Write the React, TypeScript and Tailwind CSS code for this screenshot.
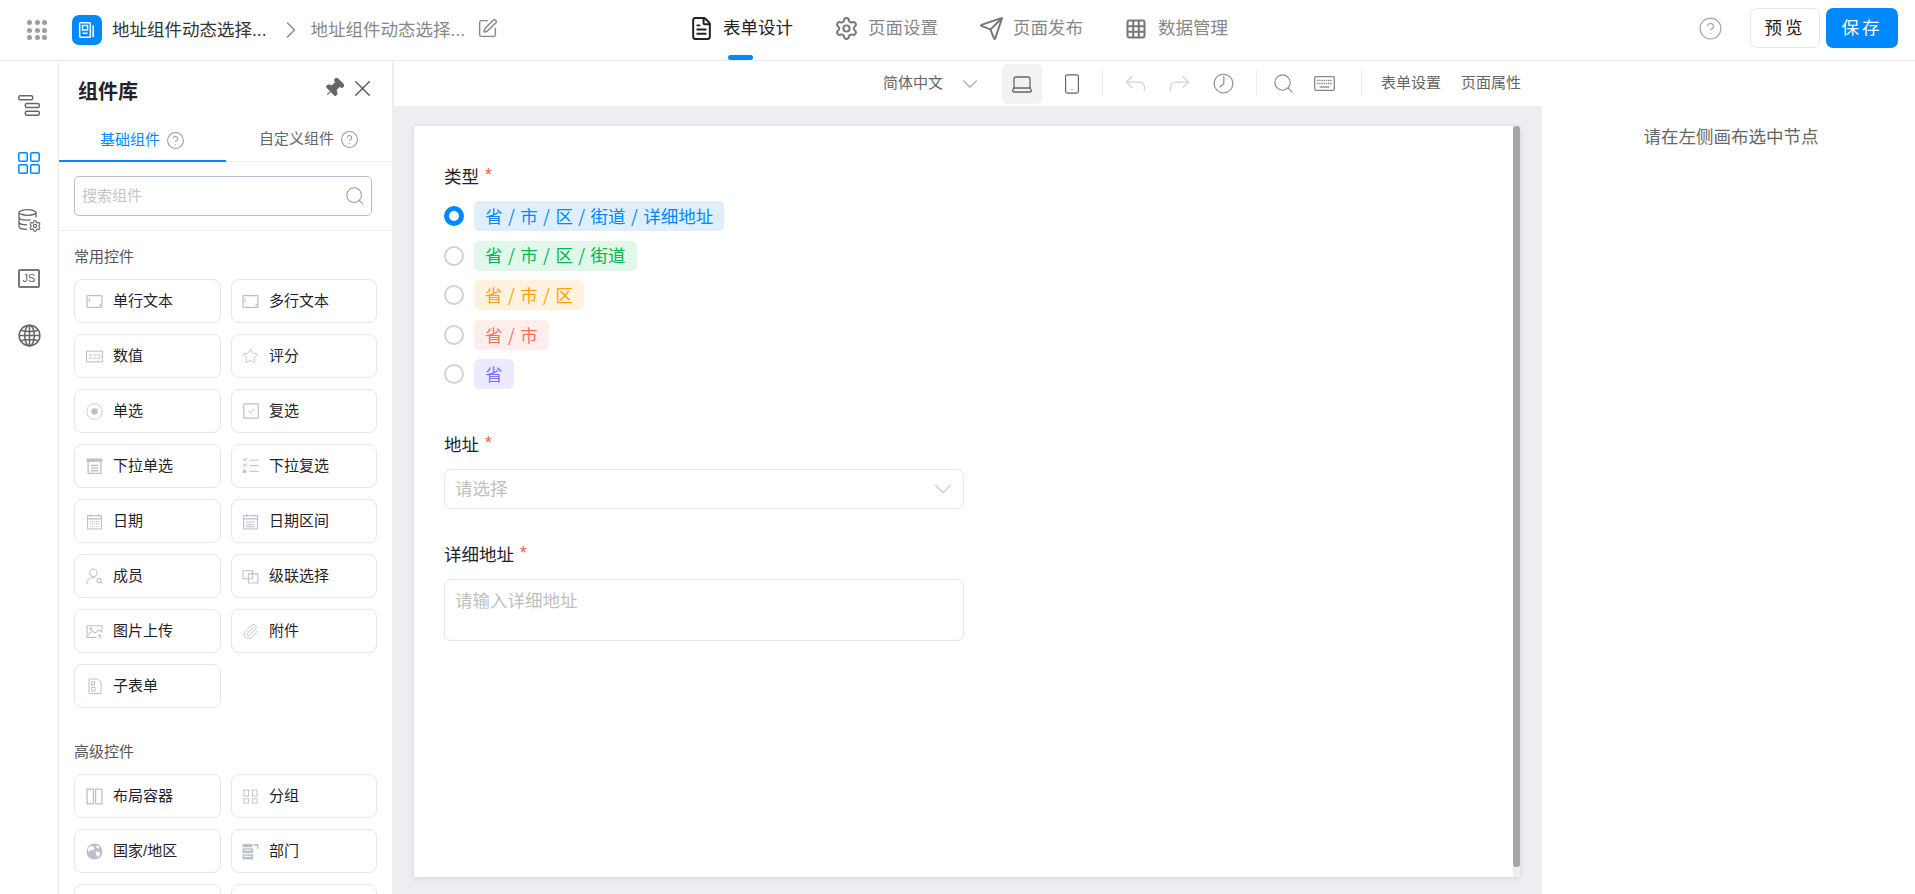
import React from 'react';
import {
  ChevronDown,
  ChevronRight,
  CircleHelp,
  FileText,
  Paperclip,
  Pin,
  Search,
  Send,
  Settings,
  Smartphone,
  Laptop,
  SquarePen,
  Star,
  X,
} from 'lucide-react';

const Glyph: React.FC<{ children: React.ReactNode; className?: string }> = ({ children, className }) => (
  <svg viewBox="0 0 16 16" fill="none" stroke="currentColor" strokeWidth="1" className={className}>
    {children}
  </svg>
);

const InputIcon = () => (
  <Glyph className="w-[17px] h-[17px]">
    <rect x="1" y="2.5" width="14" height="11" rx="0.5" strokeWidth="1.2" />
    <path d="M3 5v3.500M12 11.500h1.500V10" />
  </Glyph>
);
const NumberIcon = () => (
  <svg viewBox="0 0 16 16" fill="none" className="w-[17px] h-[17px]">
    <rect x="0.5" y="3" width="15" height="10" stroke="currentColor" />
    <text x="8" y="10.6" textAnchor="middle" fontSize="7" fill="currentColor" stroke="none">123</text>
  </svg>
);
const RadioIcon = () => (
  <Glyph className="w-[19px] h-[19px]">
    <circle cx="8" cy="8" r="7.200" strokeDasharray="2 0.4" strokeWidth="0.9" />
    <circle cx="8" cy="8" r="3" fill="currentColor" stroke="none" />
  </Glyph>
);
const CheckIcon = () => (
  <Glyph className="w-[16px] h-[16px]">
    <rect x="0.800" y="0.800" width="14.400" height="14.400" rx="1" strokeWidth="1.200" />
    <path d="M5.500 8l2 2 3.500-4" />
  </Glyph>
);
const SelectIcon = () => (
  <Glyph className="w-[17px] h-[17px]">
    <path d="M1 1h14v2H1z" fill="currentColor" />
    <path d="M2 3.500v11h12v-11M4.500 7h7M4.500 9.500h7M4.500 12h7" strokeWidth="1.200" />
  </Glyph>
);
const MultiSelectIcon = () => (
  <Glyph className="w-[18px] h-[18px]">
    <path d="M1 1.500l1.500 1.500 2-2.500M1 6.500l1.500 1.500 2-2.500M7 2.500h8.500M7 7.500h8.500M7 13h8.500" />
    <rect x="1" y="11.500" width="3" height="3" fill="currentColor" stroke="none" />
  </Glyph>
);
const DateIcon = () => (
  <Glyph className="w-[17px] h-[17px]">
    <rect x="1.500" y="2.500" width="13" height="12.500" />
    <path d="M1.500 5.500h13M4.500 1v2.500M11.500 1v2.500" />
    <path d="M4 8h8M4 10h8M4 12.500h8" strokeDasharray="1 0.800" />
  </Glyph>
);
const DateRangeIcon = () => (
  <Glyph className="w-[17px] h-[17px]">
    <rect x="1.500" y="2.500" width="13" height="12.500" />
    <path d="M1.500 5.500h13M4.500 1v2.500M11.500 1v2.500M4 8.500h8M4 11h8M4 13h8" />
  </Glyph>
);
const MemberIcon = () => (
  <Glyph className="w-[17px] h-[17px]">
    <circle cx="7" cy="4.500" r="3.500" />
    <path d="M0.800 15c0-3.500 2.500-6 6-6 0.800 0 1.500 0.100 2 0.300" />
    <circle cx="12.300" cy="11.800" r="2" />
    <path d="M13.800 13.300l1.500 1.500" />
  </Glyph>
);
const CascadeIcon = () => (
  <Glyph className="w-[18px] h-[18px]">
    <path d="M7 10.500H1V3h9v3" />
    <path d="M6 6h9v8.500H6z" />
    <path d="M10 3v7.500H7" />
  </Glyph>
);
const ImageIcon = () => (
  <Glyph className="w-[17px] h-[17px]">
    <path d="M15 9V2.500H1v11h9" />
    <circle cx="4.500" cy="5.500" r="1" />
    <path d="M2 11.500l4-4 2.500 2 3.500-3 2.500 2M13 15v-4M11.500 12.500L13 11l1.500 1.500" />
  </Glyph>
);
const SubFormIcon = () => (
  <Glyph className="w-[16px] h-[16px]">
    <path d="M2 1h8.500L14 4v11.500H2z" />
    <rect x="4.500" y="4" width="3" height="3" />
    <rect x="4.500" y="9.500" width="3.500" height="3.500" />
  </Glyph>
);
const LayoutIcon = () => (
  <Glyph className="w-[17px] h-[17px]">
    <rect x="1" y="1" width="6" height="14" rx="0.500" strokeWidth="1.200" />
    <rect x="9" y="1" width="6" height="14" rx="0.500" strokeWidth="1.200" />
  </Glyph>
);
const GroupIcon = () => (
  <Glyph className="w-[15px] h-[15px]">
    <rect x="1" y="1" width="5" height="6.500" />
    <rect x="10" y="1" width="5" height="6.500" />
    <rect x="1" y="10.500" width="5" height="4.500" />
    <rect x="10" y="10.500" width="5" height="4.500" />
  </Glyph>
);
const EarthIcon = () => (
  <svg viewBox="0 0 16 16" className="w-[17px] h-[17px]">
    <circle cx="8" cy="8" r="7.500" fill="currentColor" />
    <path d="M4 2.500l3 1 1 2-2 1.500-2-.500-1.500 2L1.500 6zM9 8l3.500.500 1 2-2.500 3-1.500-2.500zM10 2l3 2-1.500 1.500L9.500 4z" fill="#fff" />
  </svg>
);
const DeptIcon = () => (
  <svg viewBox="0 0 16 16" className="w-[17px] h-[17px]" fill="currentColor">
    <path d="M0.500 1h9.500v3H0.500zM11 1h4.500v4.500H14V2.500h-3zM0.500 5h10v4.500h-10zM0.500 10.500h10v5h-10z" />
    <path d="M2 6.500h7M2 12.500h7" stroke="#fff" />
  </svg>
);

const common: { label: string; icon: React.ReactNode }[] = [
  { label: '单行文本', icon: <InputIcon /> },
  { label: '多行文本', icon: <InputIcon /> },
  { label: '数值', icon: <NumberIcon /> },
  { label: '评分', icon: <Star strokeWidth={1.200} className="w-[18px] h-[18px]" /> },
  { label: '单选', icon: <RadioIcon /> },
  { label: '复选', icon: <CheckIcon /> },
  { label: '下拉单选', icon: <SelectIcon /> },
  { label: '下拉复选', icon: <MultiSelectIcon /> },
  { label: '日期', icon: <DateIcon /> },
  { label: '日期区间', icon: <DateRangeIcon /> },
  { label: '成员', icon: <MemberIcon /> },
  { label: '级联选择', icon: <CascadeIcon /> },
  { label: '图片上传', icon: <ImageIcon /> },
  { label: '附件', icon: <Paperclip strokeWidth={1.300} className="w-[17px] h-[17px]" /> },
  { label: '子表单', icon: <SubFormIcon /> },
];

const advanced: { label: string; icon: React.ReactNode }[] = [
  { label: '布局容器', icon: <LayoutIcon /> },
  { label: '分组', icon: <GroupIcon /> },
  { label: '国家/地区', icon: <EarthIcon /> },
  { label: '部门', icon: <DeptIcon /> },
  { label: '', icon: null },
  { label: '', icon: null },
];

const typeOptions = [
  { label: '省 / 市 / 区 / 街道 / 详细地址', tag: 'bg-[#dfefff] text-[#0089ff]', checked: true },
  { label: '省 / 市 / 区 / 街道', tag: 'bg-[#e0f7ea] text-[#00b853]', checked: false },
  { label: '省 / 市 / 区', tag: 'bg-[#fff3e0] text-[#ffa200]', checked: false },
  { label: '省 / 市', tag: 'bg-[#ffeeec] text-[#ff6f61]', checked: false },
  { label: '省', tag: 'bg-[#ebebff] text-[#7b72ff]', checked: false },
];

const tabs = [
  { label: '表单设计', icon: FileText, active: true },
  { label: '页面设置', icon: Settings, active: false },
  { label: '页面发布', icon: Send, active: false },
  { label: '数据管理', icon: null, active: false },
];

const TableIcon = () => (
  <svg viewBox="0 0 20 20" className="w-[20px] h-[20px] text-[#777]" fill="none" stroke="currentColor" strokeWidth="2">
    <rect x="1.500" y="1.500" width="17" height="17" rx="2" />
    <path d="M7.200 1.500v17M12.800 1.500v17M1.500 7.200h17M1.500 12.800h17" />
  </svg>
);

const UndoIcon = () => (
  <svg viewBox="0 0 22 18" className="w-[21px] h-[17px] text-[#d4d4d4]" fill="none" stroke="currentColor" strokeWidth="1.400">
    <path d="M7.500 1.500L1.500 7.500l6 6M1.500 7.500H15c3.300 0 5.500 2.500 5.500 5.500v4" />
  </svg>
);

const RedoIcon = () => (
  <svg viewBox="0 0 22 18" className="w-[21px] h-[17px] text-[#d4d4d4]" fill="none" stroke="currentColor" strokeWidth="1.400">
    <path d="M14.500 1.500l6 6-6 6M20.500 7.500H7C3.700 7.500 1.500 10 1.500 13v4" />
  </svg>
);

const HistoryIcon = () => (
  <svg viewBox="0 0 22 22" className="w-[21px] h-[21px] text-[#999]" fill="none" stroke="currentColor" strokeWidth="1.400">
    <circle cx="11" cy="11" r="9.800" />
    <path d="M11.300 3.500v8l-4.500 3.500" />
  </svg>
);

const KeyboardIcon = () => (
  <svg viewBox="0 0 21 15" className="w-[21px] h-[15px] text-[#888]" fill="none" stroke="currentColor" strokeWidth="1.300">
    <rect x="0.700" y="0.700" width="19.600" height="13.600" rx="1" />
    <path d="M3 4.500h15M3 7.500h15" strokeDasharray="1.400 0.800" />
    <path d="M5.500 11h10" />
  </svg>
);

const ComponentCard: React.FC<{ label: string; icon: React.ReactNode; second?: boolean }> = ({ label, icon, second }) => (
  <div className="h-[44px] flex items-center border border-[#e6e7ea] rounded-[8px] bg-white">
    <div className={second ? 'w-[17px] ml-[10px] flex justify-center text-[#b9c0cc]' : 'w-[17px] ml-[11px] flex justify-center text-[#b9c0cc]'}>
      {icon}
    </div>
    <span className="ml-[10px] text-[15px] text-[#1f2329]">{label}</span>
  </div>
);

const RequiredLabel: React.FC<{ text: string; className?: string }> = ({ text, className }) => (
  <div className={`h-[24px] flex items-center text-[17.500px] text-[#1f2329] ${className ?? ''}`}>
    {text}
    <span className="ml-[6px] text-[#ff5a46] text-[17.500px] leading-none -mt-[3px]">*</span>
  </div>
);

const RailIcon: React.FC<{ children: React.ReactNode }> = ({ children }) => (
  <div className="h-[57.500px] flex items-center justify-center">{children}</div>
);

export default function App() {
  return (
    <div className="h-[894px] overflow-hidden bg-white flex flex-col font-['Liberation_Sans','Noto_Sans_CJK_SC',sans-serif]">
      {/* top bar */}
      <header className="h-[61px] shrink-0 flex items-center border-b border-[#ebecee]">
        <div className="w-[691px] flex items-center">
          <div className="ml-[27px] w-[20px] grid grid-cols-3 gap-[2.500px]">
            {Array.from({ length: 9 }).map((_, i) => (
              <span key={i} className="w-[5px] h-[5px] rounded-full bg-[#999da3]" />
            ))}
          </div>
          <div className="ml-[25px] w-[30px] h-[30px] rounded-[7px] bg-[#0089ff] flex items-center justify-center">
            <svg viewBox="0 0 16 16" className="w-[18px] h-[18px]" fill="none" stroke="#fff" strokeWidth="1.300">
              <rect x="1.500" y="1.500" width="9.500" height="13" rx="0.800" />
              <rect x="4" y="4" width="4.500" height="4" />
              <path d="M4 10.800h4.500M13.500 4v10.500" />
            </svg>
          </div>
          <span className="ml-[10px] text-[17.500px] text-[#333]">地址组件动态选择...</span>
          <ChevronRight className="ml-[10px] -mt-[1px] w-[28px] h-[28px] text-[#888]" strokeWidth={1.200} />
          <span className="ml-[6px] text-[17.500px] text-[#888]">地址组件动态选择...</span>
          <SquarePen className="ml-[12px] -mt-[4px] w-[21px] h-[21px] text-[#888]" strokeWidth={1.600} />
        </div>
        <nav className="flex items-center h-full">
          {tabs.map((tab) => (
            <div key={tab.label} className="relative w-[145px] h-full flex items-center pb-[3px]">
              <div className="w-[20px] flex justify-center">
                {tab.icon ? (
                  <tab.icon
                    className={tab.active ? 'shrink-0 w-[25px] h-[25px] text-[#222]' : 'shrink-0 w-[25px] h-[25px] text-[#777]'}
                    strokeWidth={1.900}
                  />
                ) : (
                  <TableIcon />
                )}
              </div>
              <span className={tab.active ? 'ml-[12px] text-[17.500px] text-[#222]' : 'ml-[12px] text-[17.500px] text-[#888]'}>
                {tab.label}
              </span>
              {tab.active && (
                <span className="absolute left-[37px] bottom-0 w-[25px] h-[5px] rounded-[3px] bg-[#0089ff]" />
              )}
            </div>
          ))}
        </nav>
        <div className="ml-auto flex items-center pr-[17px] pb-[4px]">
          <CircleHelp className="w-[25px] h-[25px] text-[#aaa]" strokeWidth={1.200} />
          <button className="ml-[27px] w-[70px] h-[40px] rounded-[7px] border border-[#e6e7ea] text-[17.500px] text-[#222] tracking-[3px]">
            预览
          </button>
          <button className="ml-[6px] w-[72px] h-[40px] rounded-[7px] bg-[#0089ff] text-[17.500px] text-white tracking-[3px]">
            保存
          </button>
        </div>
      </header>

      <div className="flex-1 min-h-0 flex">
        {/* icon rail */}
        <aside className="w-[59px] shrink-0 border-r border-[#ebecee] pt-[16px] flex flex-col">
          <RailIcon>
            <svg viewBox="0 0 22 21" className="w-[22px] h-[21px]" fill="none" stroke="#666" strokeWidth="1.400">
              <rect x="0.700" y="0.700" width="14" height="4" rx="1.500" />
              <rect x="7.300" y="8.500" width="14" height="4" rx="1.500" />
              <rect x="7.300" y="16.300" width="14" height="4" rx="1.500" />
            </svg>
          </RailIcon>
          <RailIcon>
            <svg viewBox="0 0 22 22" className="w-[22px] h-[22px]" fill="none" stroke="#0089ff" strokeWidth="1.500">
              <rect x="0.800" y="0.800" width="8.500" height="8.500" rx="1.300" />
              <rect x="12.700" y="0.800" width="8.500" height="8.500" rx="1.300" />
              <rect x="0.800" y="12.700" width="8.500" height="8.500" rx="1.300" />
              <rect x="12.700" y="12.700" width="8.500" height="8.500" rx="1.300" />
            </svg>
          </RailIcon>
          <RailIcon>
            <svg viewBox="0 0 23 23" className="w-[23px] h-[23px]" fill="none" stroke="#666" strokeWidth="1.300">
              <ellipse cx="9.500" cy="3.500" rx="8.500" ry="2.800" />
              <path d="M1 3.500v14c0 1.600 3.500 2.900 8 2.900M18 3.500v5M1 8.200c0 1.600 3.500 2.900 8.500 2.900 1 0 2-0.100 3-0.200M1 13c0 1.600 3.500 2.900 8 2.900" />
              <Settings x="10.500" y="10.500" width="13" height="13" strokeWidth={2} color="#666" />
            </svg>
          </RailIcon>
          <RailIcon>
            <div className="w-[22px] h-[19px] border-2 border-[#777] rounded-[2px] flex items-center justify-center text-[11px] leading-none text-[#666]">
              JS
            </div>
          </RailIcon>
          <RailIcon>
            <svg viewBox="0 0 24 24" className="w-[23px] h-[23px]" fill="none" stroke="#666" strokeWidth="1.600">
              <circle cx="12" cy="12" r="10.800" />
              <ellipse cx="12" cy="12" rx="5" ry="10.800" />
              <path d="M12 1.200v21.600M1.200 12h21.600M3 6.500c5 1.800 13 1.800 18 0M3 17.500c5-1.800 13-1.800 18 0" />
            </svg>
          </RailIcon>
        </aside>

        {/* component library */}
        <section className="w-[335px] shrink-0 border-r-2 border-[#eceef2] overflow-hidden">
          <div className="h-[61px] flex items-center pl-[19px] pr-[16px]">
            <h2 className="text-[20px] font-bold text-[#1f2329]">组件库</h2>
            <Pin className="ml-auto -mt-[7px] w-[22px] h-[22px] rotate-45 text-[#666]" fill="#666" strokeWidth={1.200} />
            <X className="ml-[4px] -mt-[7px] w-[27px] h-[27px] text-[#555]" strokeWidth={1.200} />
          </div>
          <div className="h-[40px] flex border-b border-[#ebecee]">
            <div className="w-[167px] h-[40px] pb-[2px] border-b-2 border-[#0089ff] flex items-center justify-center text-[15px] text-[#0089ff]">
              基础组件
              <CircleHelp className="ml-[6px] w-[19px] h-[19px] text-[#999]" strokeWidth={1.300} />
            </div>
            <div className="flex-1 pb-[4px] flex items-center justify-center text-[15px] text-[#666]">
              自定义组件
              <CircleHelp className="ml-[6px] w-[19px] h-[19px] text-[#999]" strokeWidth={1.300} />
            </div>
          </div>
          <div className="pt-[14px] pb-[14px] px-[15px] border-b border-[#ebecee]">
            <div className="w-[298px] h-[40px] rounded-[5px] border border-[#b8bfcc] flex items-center pl-[7px] pr-[5px]">
              <span className="text-[15px] text-[#c4c4c4]">搜索组件</span>
              <Search className="ml-auto w-[22px] h-[22px] text-[#999]" strokeWidth={1.100} />
            </div>
          </div>
          <div className="pl-[15px]">
            <div className="mt-[16px] h-[20px] flex items-center text-[15px] text-[#555]">常用控件</div>
            <div className="mt-[12px] grid grid-cols-[147px_146px] gap-x-[10px] gap-y-[11px]">
              {common.map((item, i) => (
                <ComponentCard key={item.label} label={item.label} icon={item.icon} second={i % 2 === 1} />
              ))}
            </div>
            <div className="mt-[34px] h-[20px] flex items-center text-[15px] text-[#555]">高级控件</div>
            <div className="mt-[12px] grid grid-cols-[147px_146px] gap-x-[10px] gap-y-[11px]">
              {advanced.map((item, i) => (
                <ComponentCard key={i} label={item.label} icon={item.icon} second={i % 2 === 1} />
              ))}
            </div>
          </div>
        </section>

        {/* canvas */}
        <main className="w-[1148px] shrink-0 flex flex-col">
          <div className="h-[45px] shrink-0 flex items-center justify-end pr-[21px]">
            <span className="text-[15px] text-[#666]">简体中文</span>
            <ChevronDown className="ml-[14px] w-[26px] h-[26px] text-[#aaa]" strokeWidth={1} />
            <div className="ml-[19px] w-[40px] h-[40px] rounded-[5px] bg-[#f1f2f3] flex items-center justify-center">
              <Laptop className="w-[24px] h-[24px] text-[#666]" strokeWidth={1.300} />
            </div>
            <Smartphone className="ml-[19px] w-[22px] h-[22px] text-[#666]" strokeWidth={1.300} />
            <span className="ml-[19px] w-px h-[25px] bg-[#ebecee]" />
            <div className="ml-[22px]"><UndoIcon /></div>
            <div className="ml-[23px]"><RedoIcon /></div>
            <div className="ml-[23px]"><HistoryIcon /></div>
            <span className="ml-[22px] w-px h-[25px] bg-[#ebecee]" />
            <Search className="ml-[15px] w-[23px] h-[23px] text-[#888]" strokeWidth={1.200} />
            <div className="ml-[19px]"><KeyboardIcon /></div>
            <span className="ml-[26px] w-px h-[25px] bg-[#ebecee]" />
            <span className="ml-[19px] text-[15px] text-[#666]">表单设置</span>
            <span className="ml-[20px] text-[15px] text-[#666]">页面属性</span>
          </div>
          <div className="flex-1 bg-[#eceef2] pt-[20px] pl-[20px] pr-[22px]">
            <div className="h-[751px] bg-white shadow-[0_1px_6px_rgba(0,0,0,0.10)] flex">
              <div className="flex-1 pl-[30px] pt-[39px]">
                <RequiredLabel text="类型" />
                <div className="mt-[12px] flex flex-col gap-[9.600px]">
                  {typeOptions.map((opt) => (
                    <div key={opt.label} className="flex items-center h-[30px]">
                      {opt.checked ? (
                        <span className="w-[20px] h-[20px] rounded-full border-[5px] border-[#0089ff] bg-white" />
                      ) : (
                        <span className="w-[20px] h-[20px] rounded-full border-2 border-[#d0d2d6] bg-white" />
                      )}
                      <span className={`ml-[10px] h-[30px] px-[11px] rounded-[5px] flex items-center text-[17.500px] font-['Noto_Sans_CJK_SC',sans-serif] [word-spacing:1.500px] ${opt.tag}`}>
                        {opt.label}
                      </span>
                    </div>
                  ))}
                </div>
                <RequiredLabel text="地址" className="mt-[43.600px]" />
                <div className="mt-[12px] w-[520px] h-[40px] rounded-[7px] border border-[#e4e5e8] flex items-center pl-[10px] pr-[5px]">
                  <span className="text-[17.500px] text-[#bfbfbf]">请选择</span>
                  <ChevronDown className="ml-auto w-[30px] h-[30px] text-[#cfd2d8]" strokeWidth={1.300} />
                </div>
                <RequiredLabel text="详细地址" className="mt-[34px]" />
                <div className="mt-[12px] w-[520px] h-[62px] rounded-[7px] border border-[#e4e5e8] pl-[10px] pt-[8px]">
                  <span className="text-[17.500px] text-[#bfbfbf]">请输入详细地址</span>
                </div>
              </div>
              <div className="w-[7px] bg-[#eceef2]">
                <div className="h-[741px] bg-[#a5a6aa] rounded-[3px]" />
              </div>
            </div>
          </div>
        </main>

        {/* property panel */}
        <aside className="flex-1 pt-[64px] pl-[5px] flex justify-center">
          <span className="h-[24px] text-[17.500px] leading-[24px] text-[#666]">请在左侧画布选中节点</span>
        </aside>
      </div>
    </div>
  );
}
